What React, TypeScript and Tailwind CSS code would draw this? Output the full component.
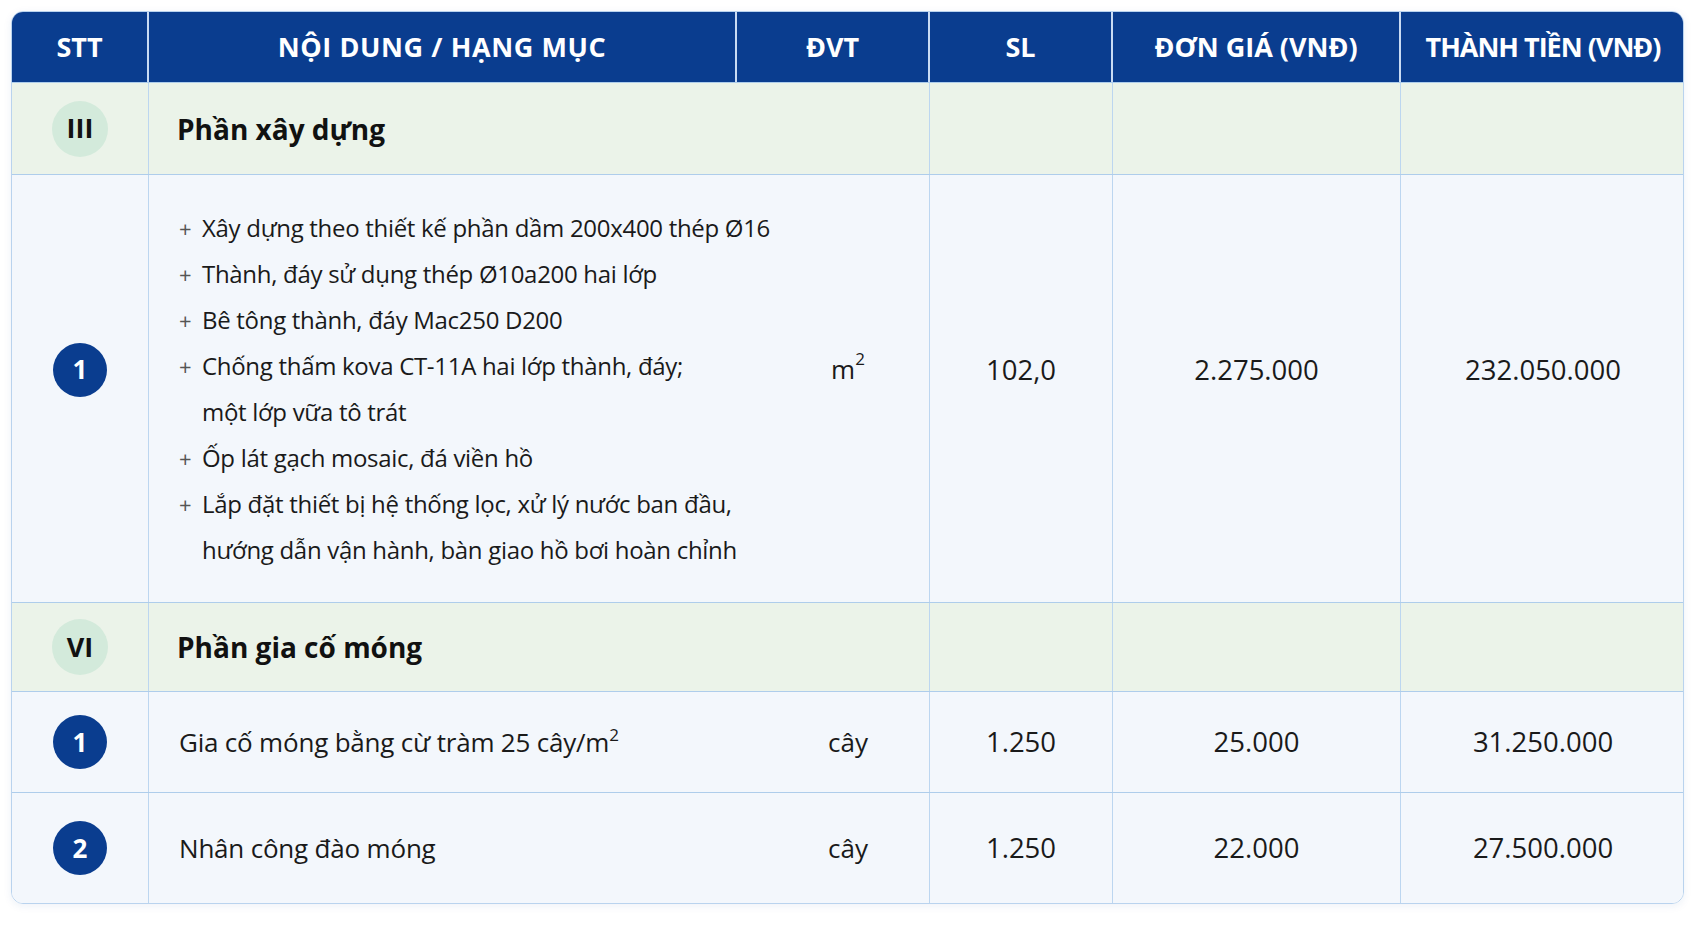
import React from "react"

const cols = "grid grid-cols-[137px_588px_193px_183px_288px_284px]"
const font = { fontFamily: '"Open Sans", "Noto Sans", sans-serif' }

type Item = {
  no: string
  lines?: string[][]
  text?: React.ReactNode
  unit: React.ReactNode
  qty: string
  price: string
  total: string
  height: string
}

const sections: { roman: string; title: string; height: string; items: Item[] }[] = [
  {
    roman: "III",
    title: "Phần xây dựng",
    height: "h-[92px]",
    items: [
      {
        no: "1",
        lines: [
          ["Xây dựng theo thiết kế phần dầm 200x400 thép Ø16"],
          ["Thành, đáy sử dụng thép Ø10a200 hai lớp"],
          ["Bê tông thành, đáy Mac250 D200"],
          ["Chống thấm kova CT-11A hai lớp thành, đáy;", "một lớp vữa tô trát"],
          ["Ốp lát gạch mosaic, đá viền hồ"],
          ["Lắp đặt thiết bị hệ thống lọc, xử lý nước ban đầu,", "hướng dẫn vận hành, bàn giao hồ bơi hoàn chỉnh"],
        ],
        unit: (
          <>
            m<sup className="text-[17px] -top-[0.6em]">2</sup>
          </>
        ),
        qty: "102,0",
        price: "2.275.000",
        total: "232.050.000",
        height: "h-[428px]",
      },
    ],
  },
  {
    roman: "VI",
    title: "Phần gia cố móng",
    height: "h-[89px]",
    items: [
      {
        no: "1",
        text: (
          <>
            Gia cố móng bằng cừ tràm 25 cây/m<sup className="text-[17px] -top-[0.6em]">2</sup>
          </>
        ),
        unit: "cây",
        qty: "1.250",
        price: "25.000",
        total: "31.250.000",
        height: "h-[101px]",
      },
      {
        no: "2",
        text: "Nhân công đào móng",
        unit: "cây",
        qty: "1.250",
        price: "22.000",
        total: "27.500.000",
        height: "h-[111px]",
      },
    ],
  },
]

const headers = [
  { label: "STT", cls: "" },
  { label: "NỘI DUNG / HẠNG MỤC", cls: "tracking-[0.6px]" },
  { label: "ĐVT", cls: "" },
  { label: "SL", cls: "" },
  { label: "ĐƠN GIÁ (VNĐ)", cls: "" },
  { label: "THÀNH TIỀN (VNĐ)", cls: "tracking-[-1px]" },
]

export default function App() {
  return (
    <div className="min-h-screen bg-white pl-[11px] pt-[11px]" style={font}>
      <div className="w-[1673px] rounded-[12px] border border-[#b9d3ee] overflow-hidden shadow-[0_2px_8px_rgba(30,80,150,0.08)]">
        {/* Header */}
        <div className={`${cols} h-[70px] bg-[#0a3d8f] text-white font-bold text-[27px]`}>
          {headers.map((h, i) => (
            <div
              key={h.label}
              className={`flex items-center justify-center ${h.cls} ${i < headers.length - 1 ? "border-r-2 border-[#c9dbf3]" : ""}`}
            >
              {h.label}
            </div>
          ))}
        </div>

        {sections.map((s) => (
          <div key={s.roman}>
            {/* Section row */}
            <div className={`${cols} ${s.height} bg-[#ebf3e9] border-t border-[#aecdeb]`}>
              <div className="flex items-center justify-center border-r border-[#bcd6f0]">
                <div className="w-[56px] h-[56px] rounded-full bg-[#d3eadb] flex items-center justify-center font-bold text-[27px] text-[#111]">
                  {s.roman}
                </div>
              </div>
              <div className="col-span-2 flex items-center pl-[28px] font-bold text-[28px] text-[#111] border-r border-[#bcd6f0]">
                {s.title}
              </div>
              <div className="border-r border-[#bcd6f0]" />
              <div className="border-r border-[#bcd6f0]" />
              <div />
            </div>

            {s.items.map((it) => {
              const shift = it.lines ? "pb-[38px]" : ""
              return (
                <div key={s.roman + it.no} className={`${cols} ${it.height} bg-[#f3f7fc] border-t border-[#aecdeb] text-[#1a1a1a]`}>
                  <div className={`flex items-center justify-center border-r border-[#bcd6f0] ${shift}`}>
                    <div className="w-[54px] h-[54px] rounded-full bg-[#0a3d8f] flex items-center justify-center font-bold text-[26px] text-white">
                      {it.no}
                    </div>
                  </div>
                  <div className="flex items-center pl-[30px] whitespace-nowrap">
                    {it.lines ? (
                      <div className="flex flex-col text-[24px]">
                        {it.lines.map((l, i) => (
                          <div key={i} className="flex">
                            <span className="w-[23px] text-[#555] text-[22px] leading-[46px]">+</span>
                            <div className="flex flex-col">
                              {l.map((t) => (
                                <span key={t} className="leading-[46px] tracking-[-0.3px]">
                                  {t}
                                </span>
                              ))}
                            </div>
                          </div>
                        ))}
                      </div>
                    ) : (
                      <span className="text-[26px] tracking-[-0.2px]">{it.text}</span>
                    )}
                  </div>
                  <div className={`flex items-center justify-center pl-[30px] text-[26px] border-r border-[#bcd6f0] ${shift}`}>{it.unit}</div>
                  <div className={`flex items-center justify-center text-[27.5px] border-r border-[#bcd6f0] ${shift}`}>{it.qty}</div>
                  <div className={`flex items-center justify-center text-[27.5px] border-r border-[#bcd6f0] ${shift}`}>{it.price}</div>
                  <div className={`flex items-center justify-center text-[27.5px] ${shift}`}>{it.total}</div>
                </div>
              )
            })}
          </div>
        ))}
      </div>
    </div>
  )
}
